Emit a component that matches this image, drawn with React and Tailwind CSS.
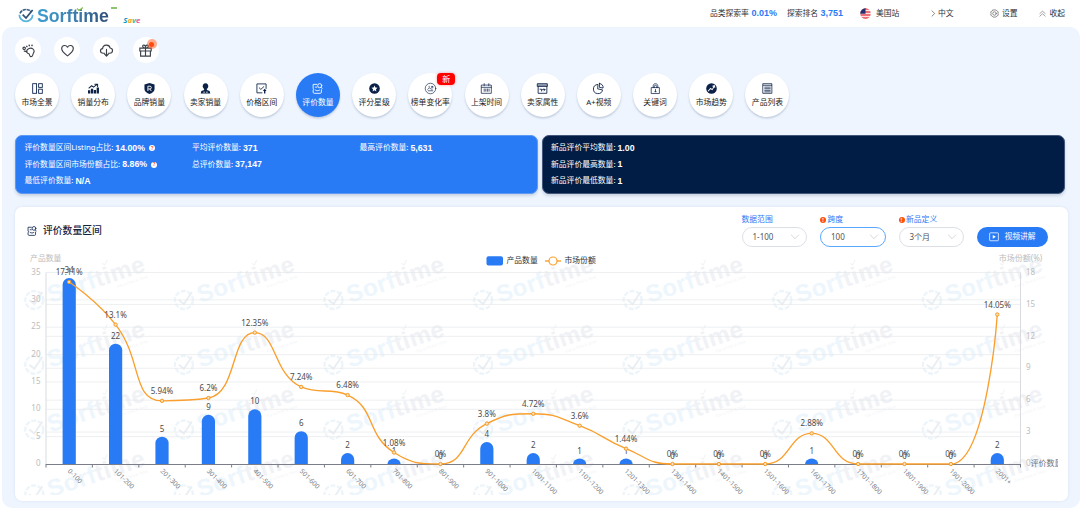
import React from 'react';

const NAVY = '#0b2148';

function Icon({ name, size = 12, color = NAVY }) {
  const s = { fill: 'none', stroke: color, strokeWidth: 1.9, strokeLinecap: 'round', strokeLinejoin: 'round' };
  const shapes = {
    overview: (
      <g {...s} strokeLinecap="butt" strokeLinejoin="miter">
        <rect x="1.500" y="1.500" width="8.500" height="21" /><rect x="14.500" y="1.500" width="8" height="8" /><rect x="14.500" y="13.500" width="8" height="9" />
      </g>
    ),
    bars: (
      <g>
        <path d="M2 11l6-5 4 3 8-6M15 2.500h6v5" {...s} strokeWidth="2.2" />
        <path fill={color} d="M0 16h5v7H0zM6.300 12.500h5V23h-5zM12.600 15h5v8h-5zM18.900 10h5v13h-5z" />
      </g>
    ),
    brand: (
      <g>
        <path fill={color} d="M12 0l11 3v10c0 5-5 9-11 11C6 22 1 18 1 13V3z" />
        <path d="M8.500 17.500V7h4.500a3 3 0 010 6H9M12.500 13L16 17.500" fill="none" stroke="#fff" strokeWidth="2" />
      </g>
    ),
    seller: (
      <g fill={color}>
        <path d="M12 .5c4.500 0 6 3 6 6.700S15 14 12 14 6 11 6 7.200 7.500.5 12 .5z" />
        <path d="M9 12h6v3l6 2.500 1.500 5.500h-21L3 17.500 9 15z" /><path fill="#fff" d="M7 19.200h4v1.300H7zM13 19.200h4v1.300h-4z" />
      </g>
    ),
    price: (
      <g>
        <path d="M13 21.500H2V2h20v10" {...s} /><path d="M7 10.500l3.500 3.500L17 8" {...s} />
        <path fill={color} d="M19 12.500l4 4.500-2.500.5V23h-3v-5.500L15 17z" />
      </g>
    ),
    review: (
      <g {...s}>
        <path d="M10.500 3H2.500v9.500c1.800 0 1.800 3 0 3V20c0 1.500.8 2.500 2.500 2.500h13c1.700 0 2.500-1 2.500-2.500v-5.500" />
        <circle cx="16.800" cy="5.800" r="4.500" /><path d="M20 9.500l2 2.500M7.500 9h3M7.500 15.500c3 1.800 6 1.800 9 0" />
      </g>
    ),
    star: (
      <g>
        <circle cx="12" cy="12" r="11.500" fill={color} />
        <path fill="#fff" d="M12 5.500l2 4.300 4.700.6-3.500 3.200.9 4.700-4.100-2.300-4.100 2.300.9-4.700-3.500-3.200 4.700-.6z" />
      </g>
    ),
    change: (
      <g {...s} strokeWidth="1.400">
        <circle cx="12" cy="12" r="11.500" /><path d="M6 14l3.500-3.500 2.500 2 5-5M7 17h10M14 7.500h3v3M9 7v2M15 13v2" />
      </g>
    ),
    calendar: (
      <g {...s} strokeWidth="1.600" strokeLinejoin="miter">
        <path d="M1.500 4.500h21v18h-21zM1.500 9.500h21M7 1.500v4.500M17 1.500v4.500M7 13v5M10.500 13v5M14 13v5M17.500 13v5" />
      </g>
    ),
    attr: (
      <g {...s} strokeLinejoin="miter">
        <path d="M2.500 8v14.500h19V8M1.500 1.500h21v6h-21zM2 4.500h20" /><path d="M6.500 13.500h3.500v4M12 14.500h5.500M15.500 12.500l2 2-2 2" />
      </g>
    ),
    pie: (
      <g {...s}>
        <path d="M10 3.200A10 10 0 1020.800 15L11 13z" /><path d="M14 1v8.500l8 1.500c.8-5-2.500-9.500-8-10z" />
      </g>
    ),
    lock: (
      <g {...s} strokeWidth="1.600" strokeLinejoin="miter">
        <path d="M3.500 10h17v13h-17zM7 10V6c0-6 10-6 10 0v4M9.500 10V7c0-2.800 5-2.800 5 0v3M12 14v5M10.500 19h3" />
      </g>
    ),
    trend: (
      <g>
        <circle cx="12" cy="12" r="11.500" fill={color} />
        <path d="M4.500 18l5.500-6 3.500 2.500L18 7M14.200 7.200L18.300 6l1 4" fill="none" stroke="#fff" strokeWidth="2.200" />
      </g>
    ),
    list: (
      <g {...s} strokeWidth="1.700" strokeLinejoin="miter">
        <path d="M2.500 1.500h19v21h-19zM3 5h18M6 9h12M6 12.500h12M6 16h12M6 19.300h12" />
      </g>
    ),
    foot: (
      <g {...s} strokeWidth="2.100">
        <path d="M8.500 13.500C9 9 16 6 20 9c3 2.300 2.500 6 .8 8.500-1.300 2-.3 3.500-2.300 5-2 1.500-4.500.3-4.500-2 0-2.200-1.500-3.300-3.500-3.500M8.500 13.500c0 2 .8 3 2 3.500" />
        <circle cx="4" cy="8" r="2.300" /><path d="M8.800 4.200l.3.500M13.300 2.400l.2.600M18.500 2.200l-.1.600M4.500 13.200l4 .8" strokeWidth="2.700" />
      </g>
    ),
    heart: <path {...s} strokeWidth="2.100" d="M12 22C7 18 1.300 14 1.300 8.300 1.300 2 9 .8 12 6 15 .8 22.700 2 22.700 8.300 22.700 14 17 18 12 22z" />,
    cloud: (
      <g {...s} strokeWidth="2.100">
        <path d="M8.500 17H6C-.5 17-.8 9.300 4.800 8.500 5.500.5 17-.3 18.800 7.500 24.800 8.500 24.500 17 18 17h-2.500" /><path d="M12 10v12M8.500 18.700l3.500 3.500 3.500-3.500" />
      </g>
    ),
    gift: (
      <g {...s} strokeWidth="2.100" strokeLinejoin="miter">
        <path d="M1.500 7.500h21v5.500h-21zM3 13v9.500h18V13M12 7.500v15M12 7.500C6 7.500 5.500 2 8.800 2S12 5.500 12 7.500c0-2 0-5.500 3.200-5.500S18 7.500 12 7.500z" />
      </g>
    ),
    gear: (
      <g {...s} strokeWidth="1.700">
        <path d="M8 2.500h8l2 2.500 4 2.500-.8 4.500.8 4.500-4 2.500-2 2.500H8L6 19l-4-2.500.8-4.500L2 7.500 6 5z" /><circle cx="12" cy="12" r="4.700" />
      </g>
    ),
    up: <path {...s} d="M3 12l9-8 9 8M3 21l9-8 9 8" />,
    right: <path {...s} strokeWidth="2.400" d="M7 3l9 9-9 9" />,
    down: <path {...s} d="M1 6l11 11L23 6" />,
    play: (
      <g>
        <rect x="1.500" y="2" width="21" height="19" rx="1.500" fill="none" stroke={color} strokeWidth="1.800" /><path fill={color} d="M9 7l7.500 4.500L9 16z" />
      </g>
    ),
  };
  return <svg width={size} height={size} viewBox="0 0 24 24" className="block shrink-0 overflow-visible">{shapes[name]}</svg>;
}

const NAV = [
  ['overview', '市场全景'], ['bars', '销量分布'], ['brand', '品牌销量'], ['seller', '卖家销量'], ['price', '价格区间'],
  ['review', '评价数量'], ['star', '评分星级'], ['change', '榜单变化率'], ['calendar', '上架时间'], ['attr', '卖家属性'],
  ['pie', 'A+视频'], ['lock', '关键词'], ['trend', '市场趋势'], ['list', '产品列表'],
];

function Logo() {
  return (
    <div className="flex h-[27px] items-center pl-[17.500px] pt-[5px]">
      <svg width="16" height="16" viewBox="0 0 24 24" className="block overflow-visible">
        <path d="M3 8a10 10 0 0117-2" fill="none" stroke="#345880" strokeWidth="2.400" strokeDasharray="5 1" />
        <path d="M2 10a10 10 0 1020 0" fill="none" stroke="#58b4dc" strokeWidth="2.600" />
        <path d="M7 10l5 5L22 3" fill="none" stroke="#2f5078" strokeWidth="2.600" />
      </svg>
      <div className="relative ml-[3.500px] bg-gradient-to-r from-[#3d9fd0] via-[#3d7fae] to-[#304f79] bg-clip-text [font-family:'Liberation_Sans',sans-serif] text-[17.700px] leading-[20px] font-bold text-transparent">
        Sorftime
        <svg width="8" height="5" viewBox="0 0 8 5" className="absolute left-[39px] top-[1px]"><path d="M1 1.500l2 2L7 .5" fill="none" stroke="#8cc152" strokeWidth="1.300" /></svg>
      </div>
      <div className="mb-[17px] ml-[2.500px] h-[2px] w-[6px] bg-[#8cc66a]" />
      <div className="ml-[6px] mt-[8px] [font-family:'Noto_Sans',sans-serif] text-[7.800px] leading-[8px] font-bold italic">
        <span className="text-[#159ac4]">S</span><span className="text-[#f5a623]">a</span><span className="text-[#2fbf9b]">v</span><span className="text-[#f0529c]">e</span>
      </div>
    </div>
  );
}

function Flag() {
  return (
    <svg width="11" height="11" viewBox="0 0 22 22" className="block">
      <clipPath id="flag"><circle cx="11" cy="11" r="10.500" /></clipPath>
      <g clipPath="url(#flag)">
        <path fill="#fbe3e3" d="M0 0h22v22H0z" />
        <path fill="#e94b55" d="M0 0h22v3.500H0zM0 6.500h22v3H0zM0 12.500h22v3H0zM0 18.500h22V22H0z" />
        <path fill="#24306f" d="M0 0h11v11.500H0z" />
      </g>
    </svg>
  );
}

function Header() {
  return (
    <header className="flex h-[27px] shrink-0 justify-between text-[7.800px] text-[#303133]">
      <Logo />
      <div className="flex h-[27px] items-center pr-[15px]">
        <div className="flex w-[77px] items-center gap-[2.500px] whitespace-nowrap">品类探索率<b className="[font-family:'Liberation_Sans',sans-serif] text-[9px] text-[#2b7af5]">0.01%</b></div>
        <div className="flex w-[73px] items-center gap-[2.500px] whitespace-nowrap">探索排名<b className="[font-family:'Liberation_Sans',sans-serif] text-[9px] text-[#2b7af5]">3,751</b></div>
        <div className="flex w-[70px] items-center gap-[5px]"><Flag />美国站</div>
        <div className="flex w-[60.500px] items-center gap-[1px]"><Icon name="right" size={7} color="#555" />中文</div>
        <div className="flex w-[49px] items-center gap-[2.500px]"><Icon name="gear" size={9} color="#555" />设置</div>
        <div className="flex items-center gap-[3px]"><Icon name="up" size={7} color="#555" />收起</div>
      </div>
    </header>
  );
}

function Hint({ dark }) {
  return dark
    ? <span className="flex size-[6px] items-center justify-center rounded-full bg-[#ff5200] text-[5px] leading-none font-bold text-white">!</span>
    : <span className="ml-[4px] flex size-[6px] items-center justify-center rounded-full bg-white text-[5px] leading-none font-bold text-[#ff5a1f]">?</span>;
}

function Stat({ label, value, hint }) {
  return (
    <div className="flex h-[16.400px] items-center whitespace-nowrap">
      {label}:<b className="ml-[2px] [font-family:'Liberation_Sans',sans-serif] text-[8.800px]">{value}</b>{hint && <Hint />}
    </div>
  );
}

function Select({ label, value, active, hint }) {
  return (
    <div className="w-[65.500px]">
      <div className="flex h-[12px] items-center gap-[1.500px] text-[7.800px] text-[#2b7af5]">{hint && <Hint dark />}{label}</div>
      <div className={`mt-[1px] flex h-[19.500px] items-center justify-between rounded-full border bg-white pr-[7px] pl-[10px] text-[8px] text-[#555] ${active ? 'border-[#5aa7ff]' : 'border-[#dcdfe6]'}`}>
        {value}<Icon name="down" size={8} color="#bcc0c8" />
      </div>
    </div>
  );
}

const LABELS = ['0-100', '101-200', '201-300', '301-400', '401-500', '501-600', '601-700', '701-800', '801-900', '901-1000', '1001-1100', '1101-1200', '1201-1300', '1301-1400', '1401-1500', '1501-1600', '1601-1700', '1701-1800', '1801-1900', '1901-2000', '2001+'];
const COUNTS = [34, 22, 5, 9, 10, 6, 2, 1, 0, 4, 2, 1, 1, 0, 0, 0, 1, 0, 0, 0, 2];
const SHARES = [17.11, 13.1, 5.94, 6.2, 12.35, 7.24, 6.48, 1.08, 0, 3.8, 4.72, 3.6, 1.44, 0, 0, 0, 2.88, 0, 0, 0, 14.05];
const X0 = 46, X1 = 1020.5, Y0 = 464, Y1 = 272.500;
const STEP = (X1 - X0) / 21;
const cx = (i) => X0 + STEP * (i + 0.5);
const yCount = (v) => Y0 - (v / 35) * (Y0 - Y1);
const yShare = (v) => Y0 - (v / 18) * (Y0 - Y1);
const clamp = (v, a, b) => Math.max(Math.min(v, Math.max(a, b)), Math.min(a, b));

// Spline whose control points never leave the box of their segment.
function smoothPath(pts) {
  let d = `M${pts[0][0]} ${pts[0][1]}`;
  let c0 = pts[0];
  for (let i = 1; i < pts.length; i++) {
    const [px, py] = pts[i - 1];
    const [x, y] = pts[i];
    let c1 = [x, y];
    let n0 = [x, y];
    if (i < pts.length - 1) {
      const [nx, ny] = pts[i + 1];
      const lp = Math.hypot(x - px, y - py);
      const ln = Math.hypot(nx - x, ny - y);
      const r = ln / (ln + lp);
      const ax = clamp(x + (nx - px) * 0.5 * r, nx, x);
      const ay = clamp(y + (ny - py) * 0.5 * r, ny, y);
      c1 = [clamp(x - ((ax - x) * lp) / ln, px, x), clamp(y - ((ay - y) * lp) / ln, py, y)];
      n0 = [x + ((x - c1[0]) * ln) / lp, y + ((y - c1[1]) * ln) / lp];
    }
    d += `C${c0[0]} ${c0[1]} ${c1[0]} ${c1[1]} ${x} ${y}`;
    c0 = n0;
  }
  return d;
}

function bar(i, v) {
  const h = Y0 - yCount(v);
  const w = 6.600;
  const r = Math.min(w, h);
  const x = cx(i);
  return `M${x - w} ${Y0}V${Y0 - h + r}A${w} ${r} 0 0 1 ${x + w} ${Y0 - h + r}V${Y0}Z`;
}

function Watermark({ x, y }) {
  return (
    <g transform={`translate(${x} ${y})`}>
      <circle r="9" fill="none" stroke="#edf5fa" strokeWidth="2.400" strokeDasharray="5 1.500" />
      <path d="M-5 0l5 4L8-8" fill="none" stroke="#eaeff4" strokeWidth="2" />
      <g transform="rotate(-18.5)">
        <text x="14.500" y="8" fontSize="24" textLength="101" fontWeight="bold" fontFamily="Liberation Sans, sans-serif">
          <tspan fill="#edf6fc">Sorf</tspan><tspan fill="#f0f2f6">time</tspan>
        </text>
        <text x="83" y="15" fontSize="4" fill="#f3f5f7" fontFamily="Liberation Sans, sans-serif">For a Find &amp; Time</text>
        <path d="M76-13l2 2 4-4" fill="none" stroke="#f0f3f5" />
      </g>
    </g>
  );
}

function Chart() {
  const pts = SHARES.map((v, i) => [cx(i), yShare(v)]);
  return (
    <svg width="1053" height="251" viewBox="15 250 1053 251" className="block" fontFamily="'Noto Sans', 'Noto Sans CJK SC', sans-serif" fontSize="8">
      <defs>
        <clipPath id="plot"><rect x="24" y="250" width="1034" height="245" /></clipPath>
      </defs>
      <g clipPath="url(#plot)">
        {[0, 1, 2, 3].map((r) => [0, 1, 2, 3, 4, 5, 6].map((c) => <Watermark key={`${r}-${c}`} x={34.300 + c * 149.600} y={300 + r * 64.800} />))}
      </g>
      <g stroke="#e4e6ea" strokeOpacity=".65">
        {[5, 10, 15, 20, 25, 30, 35].map((v) => <path key={v} d={`M${X0} ${yCount(v)}H${X1}`} />)}
        {[3, 6, 9, 12, 15].map((v) => <path key={v} d={`M${X0} ${yShare(v)}H${X1}`} />)}
      </g>
      <path d={`M${X0} ${Y1}V${Y0}M${X1} ${Y1}V${Y0}`} stroke="#d9dbe0" fill="none" />
      <g fill="#bdbdbd">
        {[0, 5, 10, 15, 20, 25, 30, 35].map((v) => <text key={v} x="40.500" y={yCount(v) + 2.200} textAnchor="end">{v}</text>)}
        {[0, 3, 6, 9, 12, 15, 18].map((v) => <text key={v} x="1026" y={yShare(v) + 2.200}>{v}</text>)}
        <text x="45.700" y="261" textAnchor="middle" fontSize="7.800">产品数量</text>
        <text x="1020.500" y="261" textAnchor="middle">市场份额(%)</text>
      </g>
      <g clipPath="url(#plot)"><text x="1030.500" y="466.300" fill="#6e7079">评价数量</text></g>
      <g fill="#297bf5">
        {COUNTS.map((v, i) => v > 0 && <path key={i} d={bar(i, v)} />)}
      </g>
      <path d={`M${X0} ${Y0 + 0.5}H${X1}` + Array.from({ length: 22 }, (_, i) => `M${X0 + i * STEP} ${Y0}v3.500`).join('')} stroke="#7b7e89" fill="none" />
      <g fill="#7a7d85" fontSize="6.700">
        {LABELS.map((t, i) => <text key={t} transform={`translate(${cx(i) - 2} 471.500) rotate(45)`}>{t}</text>)}
      </g>
      <g fill="#4c4c4c" textAnchor="middle">
        {COUNTS.map((v, i) => <text key={i} x={cx(i)} y={yCount(v) - 5}>{v}</text>)}
      </g>
      <path d={smoothPath(pts)} fill="none" stroke="#fa9f2d" strokeWidth="1.350" />
      {pts.map(([x, y], i) => <circle key={i} cx={x} cy={y} r="1.700" fill="#fbe0b8" stroke="#f59a23" strokeWidth="1" />)}
      <g fill="#4c4c4c" textAnchor="middle">
        {SHARES.map((v, i) => <text key={i} x={cx(i)} y={yShare(v) - 7}>{v}%</text>)}
      </g>
      <rect x="486.500" y="256.200" width="16.500" height="9.300" rx="2" fill="#297bf5" />
      <text x="506.500" y="263" fontSize="7.800" fill="#333">产品数量</text>
      <path d="M545 261h16" stroke="#fa9f2d" strokeWidth="1.400" />
      <circle cx="553" cy="261" r="4" fill="#fff" stroke="#fa9f2d" strokeWidth="1.200" />
      <text x="564.500" y="263" fontSize="7.800" fill="#333">市场份额</text>
    </svg>
  );
}

export default function App() {
  return (
    <div className="h-[510px] w-[1080px] overflow-hidden bg-white [font-family:'Noto_Sans','Noto_Sans_CJK_SC',sans-serif] leading-none">
      <Header />
      <main className="ml-[2px] h-[481px] rounded-[10px] bg-[#eef5ff] pt-[10px] pl-[13px]">
        <div className="flex gap-[13.200px]">
          {['foot', 'heart', 'cloud', 'gift'].map((n) => (
            <div key={n} className="relative flex size-[26px] items-center justify-center rounded-full bg-white">
              <Icon name={n} size={13} color="#3b3f46" />
              {n === 'gift' && <span className="absolute top-[2px] right-[2px] flex size-[10px] items-center justify-center rounded-full bg-[#ff5a1f]/50"><span className="size-[5px] rounded-full bg-[#ff4a0a]" /></span>}
            </div>
          ))}
        </div>
        <nav className="mt-[10px] flex gap-[12.200px]">
          {NAV.map(([icon, label]) => {
            const on = icon === 'review';
            return (
              <div key={icon} className={`relative flex size-[44px] shrink-0 flex-col items-center rounded-full pt-[10px] text-[7.800px] shadow-[0_1.500px_2px_rgba(60,80,110,0.25)] ${on ? 'bg-[#297bf5] text-white' : 'bg-white text-[#222]'}`}>
                <Icon name={icon} size={11} color={on ? '#fff' : NAVY} />
                <span className="mt-[2.500px] leading-[10px] whitespace-nowrap">{label}</span>
                {icon === 'change' && <span className="absolute top-0 left-[29px] flex h-[12px] w-[18px] items-center justify-center rounded-[4px] bg-[#fe0000] text-[8px] text-white shadow-[0_0_3px_rgba(255,0,0,0.4)]">新</span>}
              </div>
            );
          })}
        </nav>
        <section className="mt-[17.500px] flex gap-[3.500px] text-[7.800px] text-white">
          <div className="flex h-[59.500px] w-[523px] rounded-[7px] border border-[#5c9af6] bg-[#297bf5] pt-[4.500px] pl-[8.500px] shadow-[0_2px_3px_rgba(60,80,110,0.2)]">
            <div className="w-[167.500px]">
              <Stat label="评价数量区间Listing占比" value="14.00%" hint />
              <Stat label="评价数量区间市场份额占比" value="8.86%" hint />
              <Stat label="最低评价数量" value="N/A" />
            </div>
            <div className="w-[167.500px]">
              <Stat label="平均评价数量" value="371" />
              <Stat label="总评价数量" value="37,147" />
            </div>
            <div><Stat label="最高评价数量" value="5,631" /></div>
          </div>
          <div className="h-[59.500px] w-[523px] rounded-[7px] border border-[#43577a] bg-[#011d45] pt-[4.500px] pl-[8.500px] shadow-[0_2px_3px_rgba(60,80,110,0.2)]">
            <Stat label="新品评价平均数量" value="1.00" />
            <Stat label="新品评价最高数量" value="1" />
            <Stat label="新品评价最低数量" value="1" />
          </div>
        </section>
        <section className="mt-[13px] h-[294px] w-[1053px] overflow-hidden rounded-[7px] bg-white shadow-[0_0_3px_rgba(60,90,140,0.12)]">
          <div className="flex h-[43px] justify-between pr-[20px] pl-[12px]">
            <h2 className="flex items-center gap-[6px] pt-[4px] text-[9.800px] font-medium text-[#16233f]"><Icon name="review" size={10} />评价数量区间</h2>
            <div className="flex gap-[13px] pt-[7px]">
              <Select label="数据范围" value="1-100" />
              <Select label="跨度" value="100" hint active />
              <Select label="新品定义" value="3个月" hint />
              <button className="mt-[13px] flex h-[19.500px] w-[71px] items-center justify-center gap-[5px] rounded-full bg-[#297bf5] text-[7.800px] text-white"><Icon name="play" size={10} color="#fff" />视频讲解</button>
            </div>
          </div>
          <Chart />
        </section>
      </main>
    </div>
  );
}
